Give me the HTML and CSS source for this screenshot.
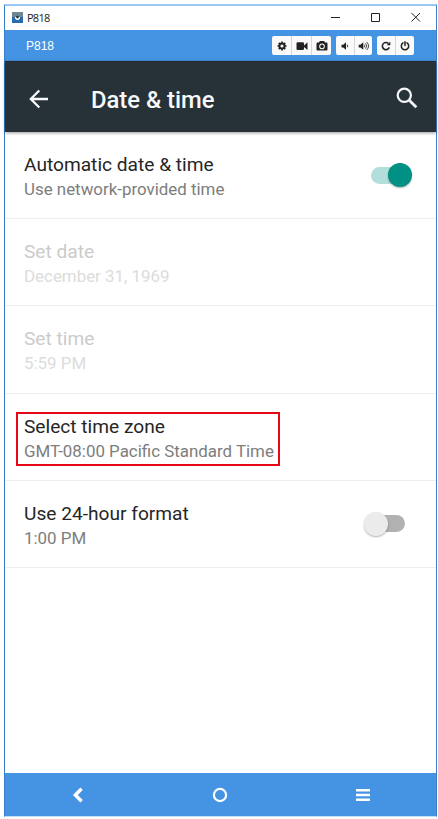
FILE: index.html
```html
<!DOCTYPE html>
<html lang="en">
<head>
<meta charset="utf-8">
<title>P818</title>
<link rel="stylesheet" href="styles.css">
</head>
<body>
<div class="window">
  <header class="titlebar">
    <svg class="app-icon" width="11" height="11" viewBox="0 0 11 11"><path fill="#6d8794" d="M0 0h11v5H0z"/><path fill="#286aae" d="M0 5h11v6H0z"/><path fill="#fff" d="M2.900 5h5.200c0 2-1 3-2.600 3s-2.600-1-2.600-3z"/><circle cx="5.500" cy="5.100" r="1.400" fill="#23343e"/></svg>
    <span class="window-name">P818</span>
    <svg class="controls" width="88" height="12" viewBox="0 0 88 12" fill="none" stroke="#222" stroke-width="1"><path d="M0 6.500h9M40.500 2.500h8v8h-8zM80.500 2l8.500 8.500M89 2l-8.500 8.500"/></svg>
  </header>
  <div class="toolbar">
    <span class="device-name">P818</span>
    <div class="group">
      <span class="tool w19"><svg width="10" height="10" viewBox="0 0 10 10"><circle cx="5" cy="5" r="2.600" fill="none" stroke="#222" stroke-width="2"/><path stroke="#222" stroke-width="1.700" d="M5 .5v1.500M5 8v1.500M.5 5H2M8 5h1.500M1.800 1.800l1 1M7.200 7.200l1 1M8.200 1.800l-1 1M2.800 7.200l-1 1"/></svg></span>
      <span class="tool w20"><svg width="12" height="10" viewBox="0 0 12 10" fill="#222"><rect x=".5" y="1.300" width="7.500" height="7.700" rx="1.300"/><path d="M8 4.500 11.500 1.300V9L8 6z"/></svg></span>
      <span class="tool w20"><svg width="12" height="10" viewBox="0 0 12 10"><path fill="#222" fill-rule="evenodd" d="M1.500 1.500H3L3.800 0h4.400L9 1.500h1.500q1 0 1 1v6q0 1-1 1h-9q-1 0-1-1v-6q0-1 1-1zM6 2.600a2.800 2.800 0 1 0 0 5.600 2.800 2.800 0 0 0 0-5.600z"/><circle cx="6" cy="5.400" r="1.800" fill="#222"/></svg></span>
    </div>
    <div class="group">
      <span class="tool w18"><svg width="10" height="10" viewBox="0 0 10 10"><path fill="#222" d="M1.500 3.700h1.700L6 1.300v7.400L3.200 6.400H1.500z"/><path fill="none" stroke="#222" stroke-width=".9" d="M7.200 3.700q1.300 1.300 0 2.600"/></svg></span>
      <span class="tool w18"><svg width="12" height="10" viewBox="0 0 12 10"><path fill="#222" d="M.7 3.700h1.700l2.900-2.400v7.400L2.400 6.400H.7z"/><path fill="none" stroke="#222" stroke-width=".8" d="M6.300 3.700q1.200 1.300 0 2.600M7.500 2.300q2.600 2.700 0 5.400M8.700 1q3.800 4 0 8"/></svg></span>
    </div>
    <div class="group">
      <span class="tool w18"><svg width="10" height="10" viewBox="0 0 10 10"><path fill="none" stroke="#222" stroke-width="1.600" d="M8.300 6.400A3.600 3.600 0 1 1 7.500 2.500"/><path fill="#222" d="M9.300.7v3.600H5.700z"/></svg></span>
      <span class="tool w19"><svg width="10" height="10" viewBox="0 0 10 10" fill="none" stroke="#222" stroke-width="1.500" stroke-linecap="round"><path d="M3 1.900a3.700 3.700 0 1 0 4 0M5 .8v3.700"/></svg></span>
    </div>
  </div>
  <div class="appbar">
    <svg class="back" width="20" height="20" viewBox="0 0 20 20" fill="none" stroke="#f7f9fa" stroke-width="2.300"><path d="M1.600 10H19M10.300 1.500 1.800 10l8.500 8.500"/></svg>
    <h1 class="page-title">Date &amp; time</h1>
    <svg class="search" width="22" height="22" viewBox="0 0 22 22" fill="none" stroke="#f4f6f7"><circle cx="8.300" cy="8.300" r="6.600" stroke-width="2.200"/><path stroke-width="2.800" d="m13 13 7.300 7.300"/></svg>
  </div>
  <main class="list">
    <section class="row"><div class="text"><div class="label">Automatic date &amp; time</div><div class="value">Use network-provided time</div></div><span class="switch on"></span></section>
    <section class="row disabled"><div class="text"><div class="label">Set date</div><div class="value">December 31, 1969</div></div></section>
    <section class="row disabled"><div class="text"><div class="label">Set time</div><div class="value">5:59 PM</div></div></section>
    <section class="row"><div class="text marked"><div class="label">Select time zone</div><div class="value">GMT-08:00 Pacific Standard Time</div></div></section>
    <section class="row"><div class="text"><div class="label">Use 24-hour format</div><div class="value">1:00 PM</div></div><span class="switch off"></span></section>
  </main>
  <nav class="navbar">
    <svg width="12" height="16" viewBox="0 0 12 16" fill="none" stroke="#fff" stroke-width="3.400"><path d="M9.600 1.700 3.300 8l6.300 6.300"/></svg>
    <svg width="16" height="16" viewBox="0 0 16 16" fill="none" stroke="#fff" stroke-width="2.200"><circle cx="8" cy="8" r="6.100"/></svg>
    <svg width="16" height="16" viewBox="0 0 16 16" fill="none" stroke="#fff" stroke-width="2.400"><path d="M1 3.200h14M1 8h14M1 12.800h14"/></svg>
  </nav>
</div>
</body>
</html>
```
FILE: styles.css
```css
* { box-sizing: border-box; }
body { margin: 0; background: #fff; font-family: Roboto, "Liberation Sans", sans-serif; }
.window { width: 433px; height: 813px; margin: 4px 0 0 4px; display: flex; flex-direction: column; border: 1px solid #357fcb; border-top: 2px solid #9ac8f3; border-bottom-color: #c3def8; background: #fff; }
.titlebar { height: 24px; flex: none; display: flex; align-items: center; padding-left: 7px; }
.app-icon { flex: none; margin-top: -1px; }
.window-name { margin-left: 4px; font: 11px/14px "Open Sans", sans-serif; letter-spacing: -0.75px; color: #222; }
.controls { margin: -3px 17px 0 auto; overflow: visible; }
.toolbar { height: 31px; flex: none; display: flex; align-items: center; gap: 5px; padding: 0 22px 0 21px; background: #4594e3; }
.device-name { margin-right: auto; font: 12px/14px "Liberation Sans", sans-serif; color: #fff; }
.group { display: flex; height: 19px; background: #fafafa; border-radius: 2px; overflow: hidden; }
.tool { display: flex; align-items: center; justify-content: center; }
.tool + .tool { border-left: 1px solid #d4d8dc; }
.w18 { width: 18px; }
.w19 { width: 19px; }
.w20 { width: 20px; }
.appbar { height: 71px; flex: none; display: flex; align-items: center; padding: 3px 18px 0 24px; background: #273238; border-top: 1px solid #1f292e; box-shadow: 0 1px 3px rgba(0, 0, 0, .4); z-index: 1; }
.page-title { margin: 3px auto 0 42px; font-size: 23.8px; line-height: 30px; font-weight: 500; color: #f8f9fa; white-space: nowrap; }
.search { margin-top: -1px; }
.list { flex: 1; }
.row { height: 87.2px; display: flex; justify-content: space-between; align-items: center; border-bottom: 1px solid #eee; padding: 0 24px 0 19px; }
.text { margin-top: 2px; white-space: nowrap; }
.label { font-size: 19.15px; line-height: 26px; color: #262626; }
.value { font-size: 16.9px; line-height: 22px; color: #7d7d7d; }
.disabled .label { color: #cbcbcb; }
.disabled .value { color: #dcdcdc; }
.marked { width: 264px; height: 54px; margin: 5px 0 0 -8px; padding-left: 6px; border: 2px solid #e80714; }
.switch { width: 42px; height: 26px; display: flex; align-items: center; }
.switch::before, .switch::after { content: ""; flex: none; }
.switch::before { width: 24px; height: 24px; border-radius: 50%; box-shadow: 0 1px 2px rgba(0, 0, 0, .3); z-index: 1; }
.switch::after { width: 30px; height: 17px; border-radius: 9px; }
.on { flex-direction: row-reverse; }
.on::before { background: #009184; }
.on::after { background: #b2dfdb; margin-right: -13px; }
.off { margin-right: 6px; }
.off::before { background: #ebebeb; }
.off::after { background: #b1b1b1; margin-left: -13px; }
.navbar { height: 43px; flex: none; display: flex; align-items: center; justify-content: space-between; padding: 0 65px 0 67px; background: #4594e3; }
```
